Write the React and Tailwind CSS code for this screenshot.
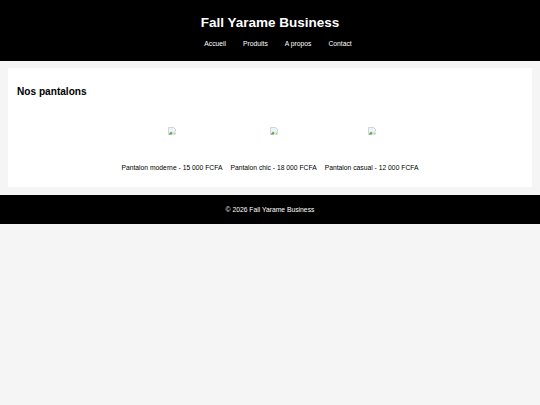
const products = [
  'Pantalon moderne - 15 000 FCFA',
  'Pantalon chic - 18 000 FCFA',
  'Pantalon casual - 12 000 FCFA',
];

// Icone d'image cassee
const BrokenImage = () => (
  <svg width="8" height="8" viewBox="0 0 8 8" className="block">
    <path d="M0.5 0.5H5.5L7.5 2.5V4L4 7.5H0.5Z" fill="#eef3fb" stroke="#b4bcc8" strokeWidth="0.6" />
    <path d="M1 7L3 4.5L4.5 6L3.5 7.5H1Z" fill="#5fa84a" />
    <path d="M5 7.5L7.5 5V7.5Z" fill="#9bc98c" />
  </svg>
);

const App = () => {
  return (
    <div className="min-h-[405px] bg-[#f5f5f5] font-['Liberation_Sans',Arial,sans-serif] text-black">
      <header className="h-[61px] bg-black pt-[14px] text-center text-white">
        <h1 className="text-[13.5px] font-bold leading-[18px]">Fall Yarame Business</h1>
        <nav className="mt-[7px] flex justify-center gap-[17px] pl-[16px] text-[6.75px] leading-[10px]">
          <a>Accueil</a>
          <a>Produits</a>
          <a>A propos</a>
          <a>Contact</a>
        </nav>
      </header>

      <main className="mx-[8px] mt-[7px] h-[119px] bg-white px-[9px] pt-[17px]">
        <h2 className="text-[10.125px] font-bold leading-[14px]">Nos pantalons</h2>
        <div className="mt-[28px] flex justify-center gap-[8px]">
          {products.map((label) => (
            <div key={label} className="flex flex-col items-center">
              <BrokenImage />
              <p className="mt-[28px] text-[6.75px] leading-[10px]">{label}</p>
            </div>
          ))}
        </div>
      </main>

      <footer className="mt-[8px] h-[29px] bg-black pt-[10px] text-center text-[6.75px] leading-[10px] text-white">
        © 2026 Fall Yarame Business
      </footer>
    </div>
  );
};

export default App;
